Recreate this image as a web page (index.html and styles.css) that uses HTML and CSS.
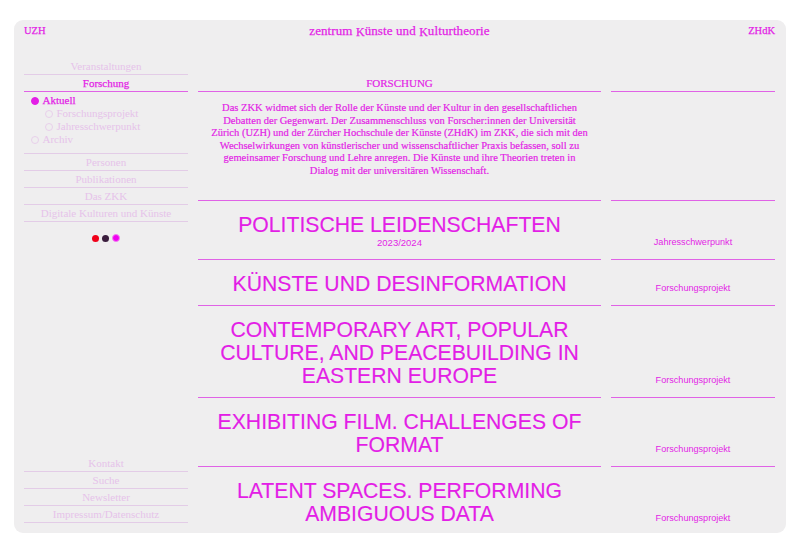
FILE: index.html
```html
<!DOCTYPE html>
<html lang="de">
<head>
<meta charset="utf-8">
<title>Zentrum Künste und Kulturtheorie – Forschung</title>
<link rel="stylesheet" href="styles.css">
</head>
<body>
<div class="frame">
  <header class="top">
    <a class="uni">UZH</a>
    <a class="brand">zentrum <span class="dk">K</span>ünste und <span class="dk">K</span>ulturtheorie</a>
    <a class="uni">ZHdK</a>
  </header>
  <div class="content">
    <aside class="side">
      <nav class="nav">
        <a class="nav-item">Veranstaltungen</a>
        <a class="nav-item active">Forschung</a>
        <ul class="sub">
          <li class="sub-item on"><span class="dot"></span>Aktuell</li>
          <li class="sub-item deep"><span class="dot"></span>Forschungsprojekt</li>
          <li class="sub-item deep"><span class="dot"></span>Jahresschwerpunkt</li>
          <li class="sub-item"><span class="dot"></span>Archiv</li>
        </ul>
        <a class="nav-item">Personen</a>
        <a class="nav-item">Publikationen</a>
        <a class="nav-item">Das ZKK</a>
        <a class="nav-item">Digitale Kulturen und Künste</a>
      </nav>
      <div class="themes">
        <span class="sw red"></span>
        <span class="sw dark"></span>
        <span class="sw pink"></span>
      </div>
      <nav class="nav bottom">
        <a class="nav-item">Kontakt</a>
        <a class="nav-item">Suche</a>
        <a class="nav-item">Newsletter</a>
        <a class="nav-item">Impressum/Datenschutz</a>
      </nav>
    </aside>
    <main class="main">
      <div class="row head">
        <div class="cell head-title">FORSCHUNG</div>
        <div class="cell"></div>
      </div>
      <div class="row intro">
        <p class="intro-text">Das ZKK widmet sich der Rolle der Künste und der Kultur in den gesellschaftlichen<br>Debatten der Gegenwart. Der Zusammenschluss von Forscher:innen der Universität<br>Zürich (UZH) und der Zürcher Hochschule der Künste (ZHdK) im ZKK, die sich mit den<br>Wechselwirkungen von künstlerischer und wissenschaftlicher Praxis befassen, soll zu<br>gemeinsamer Forschung und Lehre anregen. Die Künste und ihre Theorien treten in<br>Dialog mit der universitären Wissenschaft.</p>
        <div></div>
      </div>
      <div class="row project">
        <div class="cell title">POLITISCHE LEIDENSCHAFTEN<span class="year">2023/2024</span></div>
        <div class="cell label">Jahresschwerpunkt</div>
      </div>
      <div class="row project">
        <div class="cell title">KÜNSTE UND DESINFORMATION</div>
        <div class="cell label">Forschungsprojekt</div>
      </div>
      <div class="row project">
        <div class="cell title">CONTEMPORARY ART, POPULAR CULTURE, AND PEACEBUILDING IN EASTERN EUROPE</div>
        <div class="cell label">Forschungsprojekt</div>
      </div>
      <div class="row project">
        <div class="cell title">EXHIBITING FILM. CHALLENGES OF FORMAT</div>
        <div class="cell label">Forschungsprojekt</div>
      </div>
      <div class="row project">
        <div class="cell title">LATENT SPACES. PERFORMING AMBIGUOUS DATA</div>
        <div class="cell label">Forschungsprojekt</div>
      </div>
    </main>
  </div>
</div>
</body>
</html>
```

FILE: styles.css
```css
* { box-sizing: border-box; }

html, body {
  margin: 0;
  padding: 0;
  background: #ffffff;
}

body {
  font-family: "Liberation Serif", "Times New Roman", serif;
  color: #e31ee6;
}

a { color: inherit; text-decoration: none; }

.frame {
  margin: 20px 14px 0;
  height: 513px;
  background: #efeeef;
  border-radius: 9px;
  overflow: hidden;
  padding: 4px 11px 10px 10px;
  display: flex;
  flex-direction: column;
}

.top {
  display: flex;
  justify-content: space-between;
  align-items: center;
  height: 14px;
  line-height: 14px;
  -webkit-text-stroke: 0.25px currentColor;
}

.uni {
  font-size: 10.5px;
  width: 60px;
}
.uni:last-child { text-align: right; }

.brand {
  font-size: 13px;
  letter-spacing: 0.1px;
}
.dk {
  font-size: 0.92em;
  position: relative;
  top: 1px;
}

.content {
  flex: 1;
  min-height: 0;
  margin-top: 20px;
  display: grid;
  grid-template-columns: 164px 1fr;
  grid-template-rows: minmax(0, 1fr);
  column-gap: 10px;
}

/* sidebar */
.side {
  display: flex;
  flex-direction: column;
  height: 100%;
}

.nav {
  display: flex;
  flex-direction: column;
}

.nav-item {
  display: block;
  text-align: center;
  font-size: 11px;
  line-height: 16px;
  color: #e6c3ea;
  border-bottom: 1px solid #e3cce7;
}
.nav-item.active {
  color: #e31ee6;
  border-bottom-color: #e062e6;
  -webkit-text-stroke: 0.25px currentColor;
}

.sub {
  list-style: none;
  margin: 0;
  padding: 2px 0 7px;
  border-bottom: 1px solid #e3cce7;
}

.sub-item {
  display: flex;
  align-items: center;
  font-size: 11px;
  line-height: 13px;
  color: #e6c3ea;
  padding-left: 7px;
}
.sub-item.deep { padding-left: 21px; }
.sub-item .dot {
  width: 8px;
  height: 8px;
  border-radius: 50%;
  border: 1px solid #e8d0eb;
  margin-right: 3.5px;
  flex: none;
}
.sub-item.on {
  color: #e31ee6;
  -webkit-text-stroke: 0.25px currentColor;
}
.sub-item.on .dot {
  background: #e31ee6;
  border-color: #e31ee6;
}

.themes {
  display: flex;
  justify-content: center;
  align-items: center;
  gap: 3.3px;
  margin-top: 12px;
}
.sw {
  width: 7px;
  height: 7px;
  border-radius: 50%;
}
.sw.red { background: #f0001a; }
.sw.dark { background: #3b1d3d; }
.sw.pink {
  width: 8px;
  height: 8px;
  background: #f000f0;
  border: 1px solid #f27ef2;
}

.nav.bottom { margin-top: auto; }

/* main */
.main {
  display: flex;
  flex-direction: column;
}

.row {
  display: grid;
  grid-template-columns: 1fr 164px;
  column-gap: 10px;
}

.head { margin-top: 17px; }
.head .cell {
  border-bottom: 1px solid #e062e6;
  height: 17px;
}
.head-title {
  text-align: center;
  font-size: 11px;
  line-height: 17px;
  -webkit-text-stroke: 0.2px currentColor;
}

.intro-text {
  margin: 0;
  padding: 10px 6px 23px;
  text-align: center;
  font-size: 10.5px;
  line-height: 12.5px;
  white-space: nowrap;
  -webkit-text-stroke: 0.2px currentColor;
}

.project .cell {
  border-top: 1px solid #e062e6;
}

.title {
  padding: 12px 0 10px;
  text-align: center;
  font-family: "Liberation Sans", Arial, sans-serif;
  font-size: 21.2px;
  line-height: 23px;
  -webkit-text-stroke: 0.15px currentColor;
}

.year {
  display: block;
  font-size: 9.5px;
  line-height: 13px;
  -webkit-text-stroke: 0;
}

.label {
  display: flex;
  align-items: flex-end;
  justify-content: center;
  padding-bottom: 11px;
  font-family: "Liberation Sans", Arial, sans-serif;
  font-size: 9.1px;
  line-height: 11px;
}
```
